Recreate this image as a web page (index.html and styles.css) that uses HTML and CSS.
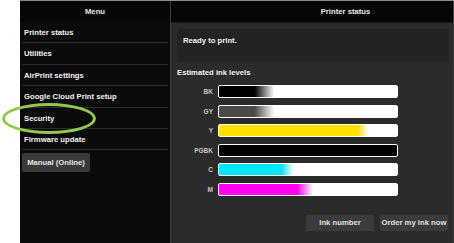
FILE: index.html
```html
<!DOCTYPE html>
<html lang="en">
<head>
    <meta charset="UTF-8">
    <title>Printer status</title>
    <link rel="stylesheet" href="styles.css">
</head>
<body>

    <div class="frame">
        <!-- Menu -->
        <div class="menu">
            <div class="menu-head">Menu</div>
            <div class="menu-item">Printer status</div>
            <div class="menu-item">Utilities</div>
            <div class="menu-item">AirPrint settings</div>
            <div class="menu-item">Google Cloud Print setup</div>
            <div class="menu-item">Security</div>
            <div class="menu-item">Firmware update</div>
            <button class="manual-btn">Manual (Online)</button>
        </div>

        <!-- Printer status -->
        <div class="status">
            <div class="status-head">Printer status</div>
            <div class="status-body">
                <div class="message">Ready to print.</div>
                <div class="ink-title">Estimated ink levels</div>
                <div class="ink-list">
                    <span class="ink-label">BK</span><div class="ink-bar bk"></div>
                    <span class="ink-label">GY</span><div class="ink-bar gy"></div>
                    <span class="ink-label">Y</span><div class="ink-bar y"></div>
                    <span class="ink-label">PGBK</span><div class="ink-bar pgbk"></div>
                    <span class="ink-label">C</span><div class="ink-bar c"></div>
                    <span class="ink-label">M</span><div class="ink-bar m"></div>
                </div>
                <div class="actions">
                    <button class="action-btn">Ink number</button>
                    <button class="action-btn">Order my ink now</button>
                </div>
            </div>
        </div>
    </div>

    <!-- Marca verde sobre "Security" -->
    <div class="highlight"></div>

</body>
</html>
```

FILE: styles.css
```css
body {
    margin: 0;
    background-color: #fff;
    font-family: "Liberation Sans", Arial, sans-serif;
    font-weight: bold;
    font-size: 7.7px;
    color: #f2f2f2;
    overflow: hidden;
}

.frame {
    display: flex;
    margin-left: 20px;
    height: 243px;
    border-top: 1px solid #8a8a8a;
}

/* Menu */
.menu {
    width: 150px;
    background-color: #0b0b0b;
    display: flex;
    flex-direction: column;
}

.menu-head, .status-head {
    height: 21px;
    line-height: 21px;
    text-align: center;
    background-color: #060606;
    color: #e8e8e8;
}

.menu-item {
    height: 20.4px;
    line-height: 22px;
    margin: 0 2px;
    padding-left: 2px;
    border-bottom: 1px solid #2c2c2c;
}

.manual-btn {
    align-self: flex-start;
    margin: 3px 0 0 2px;
    height: 19px;
    width: 68px;
    padding: 0;
    border: none;
    border-radius: 2px;
    background-color: #3a3a3a;
    color: #e6e6e6;
    font: inherit;
}

/* Printer status */
.status {
    flex: 1;
    background-color: #2b2b2b;
    border-left: 1px solid #3d3d3d;
    border-right: 1px solid #3a3a3a;
}

.status-head {
    padding-left: 67px;
    border-bottom: 1px solid #1a1a1a;
}

.status-body {
    padding: 6px 4px 0 6px;
}

.message {
    height: 33px;
    box-sizing: border-box;
    padding: 7px 6px;
    background-color: #232323;
}

.ink-title {
    margin-top: 6px;
    line-height: 10px;
}

.ink-list {
    display: grid;
    grid-template-columns: 36px 180px;
    column-gap: 5px;
    row-gap: 6.6px;
    margin-top: 7px;
    align-items: center;
}

.ink-label {
    text-align: right;
    font-size: 6.5px;
    color: #c8c8c8;
}

.ink-bar {
    height: 13px;
    box-sizing: border-box;
    border: 1.5px solid #fff;
    border-radius: 2px;
    background-color: #fff;
}

.bk { background: linear-gradient(to right, #000 0%, #000 20%, #fff 31%); }
.gy { background: linear-gradient(to right, #4a4a4a 0%, #4a4a4a 20%, #fff 31%); }
.y { background: linear-gradient(to right, #ffe100 0%, #ffe100 78%, #fff 84%); }
.pgbk { background: #000; }
.c { background: linear-gradient(to right, #00e6ff 0%, #00e6ff 35%, #fff 42%); }
.m { background: linear-gradient(to right, #ff00f0 0%, #ff00f0 44%, #fff 53%); }

.actions {
    display: flex;
    justify-content: flex-end;
    gap: 6px;
    margin-top: 19px;
    padding-right: 1px;
}

.action-btn {
    width: 68px;
    height: 16px;
    padding: 0;
    border: none;
    border-radius: 1px;
    background-color: #3b3b3b;
    color: #e0e0e0;
    font: inherit;
}

.highlight {
    position: absolute;
    left: 2px;
    top: 103px;
    width: 88px;
    height: 25px;
    border: 3px solid #93c94e;
    border-radius: 50%;
}
```
